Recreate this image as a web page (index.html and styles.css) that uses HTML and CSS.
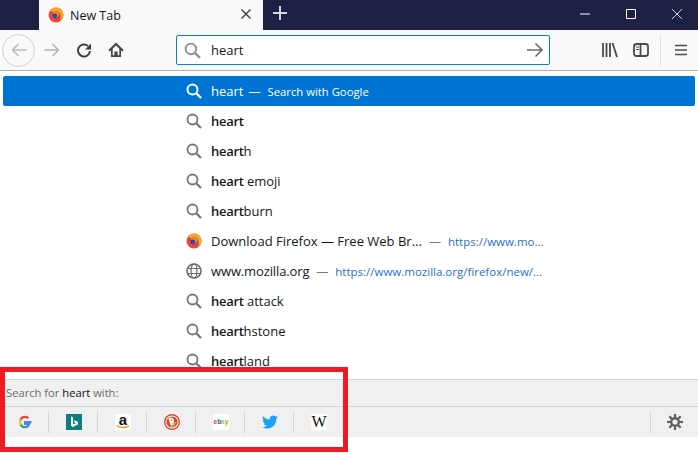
FILE: index.html
```html
<!DOCTYPE html>
<html lang="en">

<head>
    <meta charset="UTF-8">
    <meta name="viewport" content="width=device-width, initial-scale=1.0">
    <title>New Tab</title>
    <link rel="stylesheet" href="styles.css">
</head>

<body>
    <div class="titlebar">
        <div class="tab">
            <svg class="tab_icon" viewBox="0 0 16 16"><circle cx="8" cy="8" r="7.5" fill="#e8483a"/><path d="M2 4 Q5 0 9 .6 Q14 1.5 15.5 7 Q15.5 12 12 14 Q14 9 11 5.5 Q8 3.5 5 5Z" fill="#f9a825"/><circle cx="8" cy="8" r="3.6" fill="#3b3f9e"/><path d="M5 5 Q10 3 11.5 7 Q11 11 7.5 11 Q10 9.5 9 7.5 Q7.5 6 5 7Z" fill="#f58a1f"/></svg>
            <span class="tab_title">New Tab</span>
            <svg class="tab_close" viewBox="0 0 12 12"><path d="M1.5 1.5 10.5 10.5M10.5 1.5 1.5 10.5" stroke="#45454f" stroke-width="1.5" fill="none"/></svg>
        </div>
        <svg class="new_tab" viewBox="0 0 14 14"><path d="M7 0V14M0 7H14" stroke="#d6d7dd" stroke-width="2" fill="none"/></svg>
        <div class="window_btns">
            <svg viewBox="0 0 12 12"><path d="M1 6H11" stroke="#fff" fill="none"/></svg>
            <svg viewBox="0 0 12 12"><path d="M1.5 1.5H10.5V10.5H1.5Z" stroke="#fff" fill="none"/></svg>
            <svg viewBox="0 0 12 12"><path d="M1 1 11 11M11 1 1 11" stroke="#fff" stroke-width=".8" fill="none"/></svg>
        </div>
    </div>

    <div class="toolbar">
        <div class="back_btn">
            <svg viewBox="0 0 16 16"><path d="M15.5 8H1.500M7.500 2 1.500 8 7.500 14" stroke="#bbbbbf" stroke-width="1.6" fill="none"/></svg>
        </div>
        <svg class="tool_icon" viewBox="0 0 16 16"><path d="M.5 8H14.5M8.5 2 14.5 8 8.5 14" stroke="#b4b4b8" stroke-width="1.6" fill="none"/></svg>
        <svg class="tool_icon reload" viewBox="0 0 16 16"><path d="M14 9A6 6 0 1 1 12 4" stroke="#3e3e44" stroke-width="2" fill="none"/><path d="M15 1.500V7.500H9Z" fill="#3e3e44"/></svg>
        <svg class="tool_icon home" viewBox="0 0 16 16"><path fill-rule="evenodd" d="M8 .5 .3 8 1.800 9.500 3 8.300V15H13V8.300L14.200 9.500 15.700 8ZM8 3.500 11.300 6.700V13.300H9.600V9.500H6.400V13.300H4.700V6.700Z" fill="#45454d"/></svg>
        <div class="urlbar">
            <svg class="search_icon" viewBox="0 0 16 16"><circle cx="6.5" cy="6.5" r="5" stroke="#8f8f94" stroke-width="1.8" fill="none"/><path d="M10.5 10.5 15 15" stroke="#8f8f94" stroke-width="2.2"/></svg>
            <span class="url_text">heart</span>
            <svg class="go_icon" viewBox="0 0 16 16"><path d="M0 8H15M8.5 1.5 15 8 8.5 14.5" stroke="#6c6c70" stroke-width="1.6" fill="none"/></svg>
        </div>
        <div class="tool_right">
            <svg class="library" viewBox="0 0 16 16"><path d="M1 1V15M4.500 1V15M8 1V15M10.500 1 15 15" stroke="#4a4a50" stroke-width="1.8" fill="none"/></svg>
            <svg class="sidebar" viewBox="0 0 16 16"><rect x="1" y="2" width="14" height="12" rx="2.5" stroke="#4a4a50" stroke-width="1.8" fill="none"/><path d="M7.5 2V14" stroke="#4a4a50" stroke-width="1.8"/><path d="M3 5H6M3 7.500H6" stroke="#4a4a50"/></svg>
            <div class="tool_sep"></div>
            <svg class="menu" viewBox="0 0 14 12"><path d="M1 1.500H13M1 6H13M1 10.500H13" stroke="#4a4a50" stroke-width="1.6" fill="none"/></svg>
        </div>
    </div>

    <div class="results">
        <div class="row selected">
            <svg class="row_icon" viewBox="0 0 16 16"><circle cx="6.5" cy="6.5" r="5" stroke="#fff" stroke-width="2" fill="none"/><path d="M10.5 10.5 15 15" stroke="#fff" stroke-width="2.4"/></svg>
            <span class="row_text">heart</span><span class="dash">—</span><span class="row_action">Search with Google</span>
        </div>
        <div class="row">
            <svg class="row_icon" viewBox="0 0 16 16"><circle cx="6.5" cy="6.5" r="5" stroke="#76767a" stroke-width="1.8" fill="none"/><path d="M10.5 10.5 15 15" stroke="#76767a" stroke-width="2.2"/></svg>
            <span class="row_text"><b>heart</b></span>
        </div>
        <div class="row">
            <svg class="row_icon" viewBox="0 0 16 16"><circle cx="6.5" cy="6.5" r="5" stroke="#76767a" stroke-width="1.8" fill="none"/><path d="M10.5 10.5 15 15" stroke="#76767a" stroke-width="2.2"/></svg>
            <span class="row_text"><b>heart</b>h</span>
        </div>
        <div class="row">
            <svg class="row_icon" viewBox="0 0 16 16"><circle cx="6.5" cy="6.5" r="5" stroke="#76767a" stroke-width="1.8" fill="none"/><path d="M10.5 10.5 15 15" stroke="#76767a" stroke-width="2.2"/></svg>
            <span class="row_text"><b>heart</b> emoji</span>
        </div>
        <div class="row">
            <svg class="row_icon" viewBox="0 0 16 16"><circle cx="6.5" cy="6.5" r="5" stroke="#76767a" stroke-width="1.8" fill="none"/><path d="M10.5 10.5 15 15" stroke="#76767a" stroke-width="2.2"/></svg>
            <span class="row_text"><b>heart</b>burn</span>
        </div>
        <div class="row">
            <svg class="row_icon" viewBox="0 0 16 16"><circle cx="8" cy="8" r="7.5" fill="#e8483a"/><path d="M2 4 Q5 0 9 .6 Q14 1.5 15.5 7 Q15.5 12 12 14 Q14 9 11 5.5 Q8 3.5 5 5Z" fill="#f9a825"/><circle cx="8" cy="8" r="3.6" fill="#3b3f9e"/><path d="M5 5 Q10 3 11.5 7 Q11 11 7.5 11 Q10 9.5 9 7.5 Q7.5 6 5 7Z" fill="#f58a1f"/></svg>
            <span class="row_text">Download Firefox — Free Web Br...</span><span class="dash">—</span><span class="row_url">https://www.mo...</span>
        </div>
        <div class="row">
            <svg class="row_icon" viewBox="0 0 16 16"><circle cx="8" cy="8" r="7" stroke="#6a6a6e" stroke-width="1.6" fill="none"/><ellipse cx="8" cy="8" rx="3" ry="7" stroke="#6a6a6e" stroke-width="1.2" fill="none"/><path d="M1.5 5.5H14.5M1.500 10.500H14.500" stroke="#6a6a6e" stroke-width="1.2"/></svg>
            <span class="row_text site_name">www.mozilla.org</span><span class="dash">—</span><span class="row_url">https://www.mozilla.org/firefox/new/...</span>
        </div>
        <div class="row">
            <svg class="row_icon" viewBox="0 0 16 16"><circle cx="6.5" cy="6.5" r="5" stroke="#76767a" stroke-width="1.8" fill="none"/><path d="M10.5 10.5 15 15" stroke="#76767a" stroke-width="2.2"/></svg>
            <span class="row_text"><b>heart</b> attack</span>
        </div>
        <div class="row">
            <svg class="row_icon" viewBox="0 0 16 16"><circle cx="6.5" cy="6.5" r="5" stroke="#76767a" stroke-width="1.8" fill="none"/><path d="M10.5 10.5 15 15" stroke="#76767a" stroke-width="2.2"/></svg>
            <span class="row_text"><b>heart</b>hstone</span>
        </div>
        <div class="row">
            <svg class="row_icon" viewBox="0 0 16 16"><circle cx="6.5" cy="6.5" r="5" stroke="#76767a" stroke-width="1.8" fill="none"/><path d="M10.5 10.5 15 15" stroke="#76767a" stroke-width="2.2"/></svg>
            <span class="row_text"><b>heart</b>land</span>
        </div>
    </div>

    <div class="search_with">
        <div class="search_label">Search for <span class="query">heart</span> with:</div>
        <div class="engines">
            <div class="engine">
                <svg viewBox="0 0 16 16"><path d="M14.5 8.2H8V10H12.200C11.700 12 10 13.200 8 13.200" stroke="#4285f4" stroke-width="2.2" fill="none"/><path d="M8 13.200C6 13.200 4.300 12 3.500 10.400" stroke="#34a853" stroke-width="2.2" fill="none"/><path d="M3.500 10.400C2.800 8.900 2.800 7.100 3.500 5.600" stroke="#fbbc05" stroke-width="2.2" fill="none"/><path d="M3.500 5.600C4.300 4 6 2.800 8 2.800 9.400 2.800 10.500 3.300 11.400 4.100" stroke="#ea4335" stroke-width="2.2" fill="none"/></svg>
            </div>
            <div class="engine">
                <svg viewBox="0 0 16 16"><rect width="16" height="16" fill="#0f7c80"/><path d="M5 2.5 7 3.200V10.500L10 9 8.500 8.200 7.800 6.300 12 7.800V10.300L7 13 5 11.800Z" fill="#fff"/></svg>
            </div>
            <div class="engine">
                <svg viewBox="0 0 16 16"><rect width="16" height="16" rx="1" fill="#fff"/><text class="amazon_a" x="8" y="10.5" text-anchor="middle">a</text><path d="M1.5 11.500Q8 15.500 14 11.800" stroke="#f29a1f" stroke-width="1.4" fill="none"/></svg>
            </div>
            <div class="engine">
                <svg viewBox="0 0 16 16"><circle cx="8" cy="8" r="8" fill="#d9482b"/><circle cx="8" cy="8" r="6.6" fill="#fff"/><circle cx="8" cy="8" r="5.6" fill="#d9482b"/><path d="M4.500 4Q9 2.300 9.800 6L10.500 13.200H7.500L5.300 7.500Z" fill="#fff"/><path d="M8.500 8.500 12.300 8 11.800 9.500 8.500 10.200Z" fill="#e8a92a"/><path d="M7.500 11 10 10.500 10.300 13 8 13.200Z" fill="#5cb247"/><circle cx="7.500" cy="6" r=".7" fill="#2d4f8e"/></svg>
            </div>
            <div class="engine">
                <svg viewBox="0 0 16 16"><rect width="16" height="16" rx="1" fill="#fff"/><text class="ebay" x="0.500" y="10"><tspan fill="#e53238">e</tspan><tspan fill="#0064d2">b</tspan><tspan fill="#f5af02">a</tspan><tspan fill="#86b817">y</tspan></text></svg>
            </div>
            <div class="engine">
                <svg viewBox="0 0 16 16"><path d="M16 3.100C15.400 3.400 14.800 3.500 14.100 3.600 14.800 3.200 15.300 2.600 15.500 1.800 14.900 2.200 14.200 2.500 13.400 2.600 12.800 2 12 1.600 11.100 1.600 9.300 1.600 7.800 3.100 7.800 4.900 7.800 5.200 7.800 5.400 7.900 5.600 5.200 5.500 2.800 4.200 1.100 2.200 .8 2.700 .7 3.200 .7 3.900 .7 5 1.300 6 2.200 6.600 1.700 6.600 1.200 6.400 .7 6.200V6.200C.7 7.800 1.800 9.100 3.300 9.400 3 9.500 2.800 9.500 2.400 9.500 2.200 9.500 2 9.500 1.800 9.400 2.200 10.700 3.400 11.700 4.900 11.700 3.700 12.600 2.300 13.100 .8 13.100 .5 13.100 .3 13.100 0 13.100 1.500 14 3.200 14.600 5 14.600 11.100 14.600 14.400 9.500 14.400 5.100V4.700C15 4.200 15.600 3.700 16 3.100Z" fill="#1da1f2"/></svg>
            </div>
            <div class="engine">
                <svg viewBox="0 0 16 16"><rect width="16" height="16" fill="#fff"/><text class="wiki" x="8" y="13" text-anchor="middle">W</text></svg>
            </div>
            <div class="settings">
                <svg viewBox="0 0 16 16"><circle cx="8" cy="8" r="3.800" stroke="#5f5f63" stroke-width="2.4" fill="none"/><path d="M8 0V3.500M8 12.500V16M0 8H3.500M12.500 8H16M2.300 2.300 4.800 4.800M11.200 11.200 13.700 13.700M13.700 2.300 11.200 4.800M4.800 11.200 2.300 13.700" stroke="#5f5f63" stroke-width="2.2"/></svg>
            </div>
        </div>
    </div>

    <div class="highlight"></div>
</body>

</html>
```

FILE: styles.css
```css
html, body {
    margin: 0;
    height: 100%;
}

body {
    font-family: "Open Sans", "Liberation Sans", sans-serif;
    background-color: #fff;
    color: #16161a;
    overflow: hidden;
    position: relative;
}

svg {
    display: block;
}

.titlebar {
    display: flex;
    align-items: center;
    height: 30px;
    background-color: #1f2144;
}

.tab {
    display: flex;
    align-items: center;
    width: 224px;
    height: 30px;
    margin-left: 39px;
    padding: 0 11px 0 9px;
    box-sizing: border-box;
    background-color: #f9f9fa;
}

.tab_icon {
    width: 16px;
    height: 16px;
}

.tab_title {
    margin-left: 6px;
    font-size: 12.5px;
    flex: 1;
}

.tab_close {
    width: 12px;
    height: 12px;
    margin-bottom: 2px;
}

.new_tab {
    width: 14px;
    height: 14px;
    margin-left: 10px;
    margin-bottom: 4px;
}

.window_btns {
    display: flex;
    align-items: center;
    gap: 34px;
    margin-left: auto;
    margin-right: 15px;
    margin-bottom: 2px;
}

.window_btns svg {
    width: 12px;
    height: 12px;
}

.toolbar {
    display: flex;
    align-items: center;
    height: 40px;
    background-color: #f9f9fa;
    border-bottom: 1px solid #b1b1b3;
    padding-left: 2px;
}

.back_btn {
    display: flex;
    align-items: center;
    justify-content: center;
    width: 33px;
    height: 33px;
    box-sizing: border-box;
    border: 1px solid #d0d0d2;
    border-radius: 50%;
}

.back_btn svg {
    width: 16px;
    height: 16px;
}

.tool_icon {
    width: 16px;
    height: 16px;
    margin-left: 9px;
}

.reload {
    margin-left: 16px;
}

.home {
    margin-left: 16px;
}

.urlbar {
    display: flex;
    align-items: center;
    width: 374px;
    height: 30px;
    margin-left: 52px;
    padding: 0 6px 0 7px;
    box-sizing: border-box;
    background-color: #fff;
    border: 1px solid #0a84c1;
    border-radius: 2px;
}

.search_icon {
    width: 17px;
    height: 17px;
}

.url_text {
    margin-left: 10px;
    font-size: 13px;
    flex: 1;
}

.go_icon {
    width: 16px;
    height: 16px;
}

.tool_right {
    display: flex;
    align-items: center;
    margin-left: 52px;
}

.library {
    width: 16px;
    height: 16px;
}

.sidebar {
    width: 16px;
    height: 16px;
    margin-left: 15px;
}

.tool_sep {
    width: 1px;
    height: 33px;
    background-color: #e2e2e4;
    margin-left: 11px;
}

.menu {
    width: 14px;
    height: 12px;
    margin-left: 13px;
}

.results {
    padding: 5px 3px 0;
    height: 308px;
    overflow: hidden;
    box-sizing: border-box;
}

.row {
    display: flex;
    align-items: center;
    height: 30px;
    padding-left: 183px;
    font-size: 13px;
    white-space: nowrap;
}

.row b {
    font-weight: 600;
    letter-spacing: -.3px;
}

.selected {
    background-color: #0074d3;
    color: #fff;
    border-radius: 2px;
}

.row_icon {
    width: 16px;
    height: 16px;
    margin-right: 9px;
}

.site_name {
    letter-spacing: -.13px;
}

.dash {
    margin: 0 7px;
    color: #77777b;
    font-size: 12px;
}

.selected .dash {
    margin-left: 5px;
    color: #fff;
}

.row_action {
    font-size: 11.3px;
}

.row_url {
    font-size: 11.5px;
    color: #2a6fc4;
}

.search_with {
    background-color: #f0f0f0;
    font-size: 11.2px;
    color: #6a6a6e;
}

.search_label {
    height: 26px;
    line-height: 26px;
    padding-left: 6px;
    border-top: 1px solid #d4d4d4;
    border-bottom: 1px solid #d4d4d4;
}

.query {
    color: #111;
}

.engines {
    display: flex;
    align-items: center;
    height: 30px;
}

.engine {
    display: flex;
    align-items: center;
    justify-content: center;
    width: 46px;
    height: 22px;
    padding-left: 2px;
    border-right: 1px solid #d4d4d4;
}

.engine:nth-child(7) {
    border-right: none;
}

.engine svg {
    width: 16px;
    height: 16px;
    overflow: visible;
}

.amazon_a {
    font: 700 15px "Liberation Sans", sans-serif;
    fill: #111;
}

.ebay {
    font: 700 6.5px "Liberation Sans", sans-serif;
}

.wiki {
    font: 400 16px "Liberation Serif", serif;
    fill: #111;
}

.settings {
    display: flex;
    align-items: center;
    justify-content: flex-end;
    width: 48px;
    height: 22px;
    margin-left: auto;
    padding-right: 15px;
    box-sizing: border-box;
    border-left: 1px solid #d4d4d4;
}

.settings svg {
    width: 16px;
    height: 16px;
}

/* red annotation box drawn over the screenshot */
.highlight {
    position: absolute;
    left: 0;
    top: 367px;
    width: 348px;
    height: 85px;
    box-sizing: border-box;
    border: 5px solid #ed1c24;
}
```
